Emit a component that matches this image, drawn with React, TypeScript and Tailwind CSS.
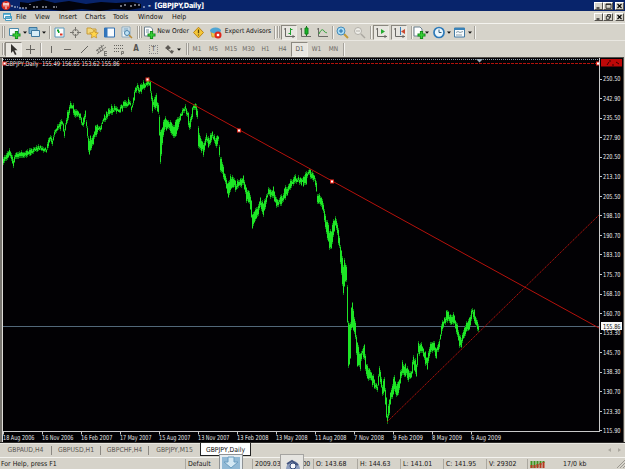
import type { ReactNode } from "react";

const UI = "font-['DejaVu_Sans_Condensed','DejaVu_Sans',sans-serif] font-stretch-condensed";

// x, high, low
const BARS: number[][] = [
  [3,158,165],[5,155,160],[7,152,158],[9,149,155],[11,153,159],[13,160,166],[15,154,159],[18,153,158],[22,152,157],[26,151,156],[30,150,155],[34,148,152],[37,147,151],[40,145,149],[43,148,152],[46,149,152],[48,140,147],[50,135,140],[52,140,144],[54,131,136],[57,126,130],[60,122,128],[62,121,126],[64,129,136],[66,117,125],[69,106,113],[71,103,108],[74,108,116],[78,110,116],[80,114,120],[82,121,127],[85,111,118],[87,128,136],[88.5,142,155],[90,136,150],[92,138,145],[95,128,136],[98,125,130],[100,127,132],[102,119,123],[105,115,120],[108,109,115],[112,107,112],[115,107,111],[118,109,112],[121,106,110],[124,102,107],[127,101,106],[129,99,103],[131,106,111],[133,98,103],[135,88,94],[137,85,90],[139,87,93],[142,84,90],[145,82,87],[147,80,84],[148,78,83],[150,84,90],[152,98,110],[154,100,106],[156,95,108],[158,106,112],[160,130,160],[161,132,156],[163,120,134],[165,118,130],[168,120,127],[170,122,134],[173,125,135],[176,122,134],[179,115,121],[182,108,114],[185,105,110],[187,110,117],[189,120,131],[191,115,122],[193,104,111],[195,105,110],[197,109,118],[198,125,146],[200,138,148],[203,144,154],[206,133,140],[208,138,147],[212,132,138],[215,138,147],[218,137,142],[220,157,170],[222,163,175],[225,176,184],[228,184,196],[230,177,190],[233,178,185],[236,183,190],[239,180,187],[243,176,184],[246,190,200],[249,191,201],[251,200,215],[252,214,230],[254,210,222],[257,207,218],[260,199,208],[263,205,215],[266,196,202],[268,187,195],[270,191,197],[273,188,195],[276,198,209],[279,200,205],[282,196,202],[285,188,196],[288,185,192],[291,180,186],[294,176,183],[297,178,182],[300,177,182],[304,178,185],[306,173,182],[308,169,175],[311,172,178],[314,176,181],[316,181,190],[317,194,203],[320,198,205],[323,204,213],[325,216,230],[327,222,240],[329,230,247],[331,231,248],[333,220,235],[335,218,224],[337,222,236],[339,238,248],[341,250,275],[343,268,296],[344,260,285],[346,265,282],[347,288,320],[348,320,368],[350,325,358],[351,310,330],[352,303,325],[355,322,340],[357,345,365],[360,355,368],[362,348,355],[364,346,358],[366,364,377],[369,370,380],[372,374,384],[375,382,390],[377,384,392],[379,367,378],[382,384,395],[384,380,393],[386,398,415],[387,413,422],[389,398,412],[391,390,400],[394,375,388],[396,385,398],[399,378,388],[402,363,375],[405,366,374],[408,371,380],[411,370,378],[413,355,366],[416,365,377],[418,344,355],[421,344,350],[424,351,360],[427,358,368],[430,345,352],[433,342,350],[436,349,356],[439,339,348],[441,326,335],[444,318,325],[447,310,320],[450,316,325],[454,315,325],[457,324,334],[459,335,348],[461,337,345],[464,325,335],[467,322,332],[470,315,325],[472,308,315],[474,311,320],[476,318,328],[478,325,332],
];

// Deterministic value in -0.5..0.5 for each column
function jitter(i: number, seed: number) {
  let h = Math.imul(i + 1, 374761393) ^ Math.imul(seed, 668265263);
  h = Math.imul(h ^ (h >>> 13), 1274126177);
  return ((h ^ (h >>> 16)) >>> 0) / 4294967296 - 0.5;
}

function pricePath(grow: number) {
  let d = "";
  let k = 0;
  for (let x = 3; x <= 478; x++) {
    while (k < BARS.length - 2 && BARS[k + 1][0] < x) k++;
    const a = BARS[k];
    const b = BARS[k + 1];
    const t = (x - a[0]) / (b[0] - a[0]);
    const amp = x < 60 ? 2.5 : 5;
    const hi = a[1] + (b[1] - a[1]) * t + jitter(x, 3) * amp - grow;
    const lo = a[2] + (b[2] - a[2]) * t + jitter(x, 11) * amp + grow;
    d += `M${x + 0.5} ${hi.toFixed(1)}V${Math.max(lo, hi + 2).toFixed(1)}`;
  }
  return d;
}

const PRICES = ["250.50","242.90","235.50","227.90","220.50","213.10","205.50","198.10","190.70","183.10","175.70","168.10","160.70","153.30","145.70","138.30","130.70","123.30","115.90"];
const DATES: [number, string][] = [
  [3,"18 Aug 2006"],[42,"16 Nov 2006"],[81,"16 Feb 2007"],[120,"17 May 2007"],[159,"15 Aug 2007"],[198,"13 Nov 2007"],[237,"13 Feb 2008"],[276,"13 May 2008"],[315,"11 Aug 2008"],[354,"7 Nov 2008"],[393,"9 Feb 2009"],[432,"8 May 2009"],[471,"6 Aug 2009"],
];

function Chart() {
  return (
    <svg className="block shrink-0" width="625" height="386" viewBox="0 57 625 386" fontFamily="'DejaVu Sans Condensed','DejaVu Sans',sans-serif" fontStretch="condensed">
      <rect x="0" y="57" width="625" height="386" fill="#020104" />
      <rect x="0" y="57" width="2" height="386" fill="#77746e" />
      <path d="M2.5 58V443" stroke="#dedcd8" />
      <path d="M0 57.5H625" stroke="#504e4a" />
      <path d="M3 59.5H599" stroke="#8fa0ac" strokeDasharray="1 1" />
      <path d="M3 326.5H599" stroke="#526879" />
      <path d={pricePath(1)} stroke="#0a7813" strokeWidth="1" shapeRendering="crispEdges" />
      <path d={pricePath(-0.7)} stroke="#1ee626" strokeWidth="1" shapeRendering="crispEdges" />
      <g stroke="#b5120c" strokeWidth="1" fill="none">
        <path d="M3 63.5H599" strokeDasharray="3 1" />
        <path d="M147 79L599 328" />
        <path d="M387 422L599 215" strokeDasharray="1.5 0.8" />
      </g>
      {[[147.5, 79.5], [239, 130.5], [332, 181.5], [598, 63.5], [4.5, 63.5]].map(([x, y]) => (
        <rect key={x} x={x - 1.5} y={y - 1.5} width="3" height="3" fill="#fff" stroke="#e3281d" />
      ))}
      <text x="5.5" y="66" fontSize="6.5" fill="#e4e4e4" textLength="114" lengthAdjust="spacingAndGlyphs" xmlSpace="preserve">GBPJPY,Daily  155.49 156.65 153.62 155.86</text>
      <path d="M476 59H483L479.5 62.5Z" fill="#9aabb8" />
      <path d="M599.5 58V431.5M3 431.5H600" stroke="#c9c9c9" fill="none" />
      <g fontSize="6.8" fill="#e6e6e6">
        {PRICES.map((p, i) => (
          <g key={p}>
            <path d={`M600 ${Math.round(78.5 + i * 19.55) + 0.5}h2`} stroke="#c9c9c9" />
            <text x="603" y={81.2 + i * 19.55} textLength="17.5" lengthAdjust="spacingAndGlyphs">{p}</text>
          </g>
        ))}
        {DATES.map(([x, t]) => (
          <g key={x}>
            <path d={`M${x + 0.5} 432v2.5`} stroke="#c9c9c9" />
            <text x={x} y="440" textLength={t.length === 11 ? 31.5 : 30} lengthAdjust="spacingAndGlyphs">{t}</text>
          </g>
        ))}
      </g>
      <rect x="601" y="59" width="21" height="7.5" fill="#be0808" />
      <path d="M607 65l2-3M609 61h2M612 65h2M616 62l3 2" stroke="#300" />
      <rect x="601" y="322" width="21" height="8" fill="#f8f8f8" />
      <text x="603" y="328.5" fontSize="6.8" fill="#111" textLength="17.5" lengthAdjust="spacingAndGlyphs">155.86</text>
      <path d="M623.5 58V443" stroke="#55524d" />
      <path d="M624.5 57V443" stroke="#d6d3ca" />
      <path d="M0 442.5H625" stroke="#2b2a28" />
    </svg>
  );
}

function Slot({ w, on, children }: { w: string; on?: boolean; children?: ReactNode }) {
  return (
    <div className={`flex h-[15px] shrink-0 items-center justify-center whitespace-nowrap ${w} ${on ? "border border-[#eeece6] border-t-[#8b8880] border-l-[#8b8880] bg-[#e8e6e0]" : ""}`}>
      {children}
    </div>
  );
}

const Ic = ({ children }: { children: ReactNode }) => (
  <svg className="block shrink-0" width="13" height="13" viewBox="0 0 13 13" fill="none">{children}</svg>
);
const Drop = () => <svg className="block shrink-0" width="4" height="3" viewBox="0 0 4 3"><path d="M0 .5h4L2 2.7z" fill="#111" /></svg>;
const Grip = () => <div className="h-[12px] w-[3px] shrink-0 border-r border-l border-[#a29f98] bg-[#edebe6]" />;
const Sep = () => <div className="h-[13px] w-[2px] shrink-0 border-r border-[#f4f3ef] bg-[#a5a29b]" />;
const Plus = () => <path d="M8.5 5v8M4.5 9h8" stroke="#138b18" strokeWidth="3.2" />;
const PlusLight = () => <path d="M8.5 6v6M5.5 9h6" stroke="#35ce36" strokeWidth="1.6" />;

function WinButtons({ restore }: { restore?: boolean }) {
  const b = "flex h-[8px] items-center justify-center border border-white border-r-[#55524d] border-b-[#55524d] bg-[#d6d3ca]";
  return (
    <div className="flex pr-px">
      <div className={`${b} w-[9px]`}><svg width="7" height="6"><path d="M1.5 5h3" stroke="#000" strokeWidth="1.2" /></svg></div>
      <div className={`${b} w-[10px]`}>
        <svg width="7" height="6" fill="none" stroke="#111" strokeWidth=".8">
          {restore ? <path d="M2.5 2V.6h3v3H4.5M1.3 2.3h3v3h-3z" /> : <path d="M1 1h5v4.3H1zM1 1.4h5" />}
        </svg>
      </div>
      <div className={`${b} ml-[2px] w-[9px]`}><svg width="7" height="6"><path d="M1.5 1l4 4M5.5 1l-4 4" stroke="#000" strokeWidth="1.1" /></svg></div>
    </div>
  );
}

function TitleBar() {
  return (
    <div className="flex h-[11px] items-center bg-[#08246b] pl-[1px]">
      <svg className="shrink-0" width="147" height="11" viewBox="0 0 147 11" fill="none">
        <circle cx="5" cy="5.5" r="4.5" fill="#d62b20" />
        <path d="M2 4h6M3 2.5v4M7 2.5v4M5 3v6" stroke="#fff" />
        <path d="M19 2l8 1 15-3 12 3 14-2 17 3 15-2 15 1 17-1 8 2v4l-12 2-15-1-14 2-18-2-19 2-16-2-19 1-8-3z" fill="#02030b" />
        <path d="M11 5v3M13 7h4M18 8h8M29 4v1M32 7h5M41 7h6M52 7h4M120 7v-2M124 4v3M129 6h3M134 4v3M137 5h3M142 7h2" stroke="#d9deea" strokeDasharray="2 1" />
      </svg>
      <div className="flex-1 text-[7.3px] leading-[11px] font-bold tracking-[-0.28px] whitespace-nowrap text-white"><span className="mr-[2px]">-</span> [GBPJPY,Daily]</div>
      <WinButtons />
    </div>
  );
}

function MenuBar() {
  return (
    <div className="flex h-[12px] items-center text-[7px] leading-[12px]">
      <div className="w-[16px] pl-[3px]">
        <svg className="block" width="10" height="10" fill="none"><path d="M.5 1.5h7v5h-7zM2.5 4.5h6v4h-6z" fill="#f7fbfc" stroke="#4b9bc0" /><path d="M.5 2h7M3 5h6" stroke="#3fa0c8" strokeWidth="1.5" /></svg>
      </div>
      <div className="w-[19px]">File</div>
      <div className="w-[24px]">View</div>
      <div className="w-[26px]">Insert</div>
      <div className="w-[28px]">Charts</div>
      <div className="w-[25px]">Tools</div>
      <div className="w-[34px]">Window</div>
      <div className="flex-1">Help</div>
      <WinButtons restore />
    </div>
  );
}

function MainToolbar() {
  return (
    <div className="flex h-[17px] items-center border-t border-[#f4f3ef] text-[6.6px]">
      <div className="ml-[2px]"><Grip /></div>
      <Slot w="w-[18px]"><Ic><path d="M1.5 2.5h9v7h-9z" fill="#f4fafc" stroke="#4a88aa" /><Plus /><PlusLight /></Ic></Slot><Drop />
      <Slot w="w-[15px]"><Ic><path d="M1 1.5h8v6H1z" fill="#7fb5d6" stroke="#3e789f" /><path d="M3.5 4.5h8v6h-8z" fill="#d7edf7" stroke="#3e789f" /></Ic></Slot><Drop />
      <div className="ml-[3px]"><Sep /></div>
      <Slot w="w-[16px]"><Ic><path d="M2 2h9v9H2z" fill="#fdfdfd" stroke="#5a98bc" /><path d="M4 4.5h2M5 6h1.5" stroke="#12a02b" strokeWidth="2" /><path d="M7 8.5h2.5" stroke="#dd3322" strokeWidth="2" /></Ic></Slot>
      <Slot w="w-[17px]"><Ic><circle cx="6.5" cy="6.5" r="3" stroke="#77756f" /><path d="M6.5 1v4M6.5 8v4M1 6.5h4M8 6.5h4" stroke="#77756f" /></Ic></Slot>
      <Slot w="w-[17px]"><Ic><path d="M1 2h4l1 1h4v5H1z" fill="#f3d87c" stroke="#c69a38" /><path d="M8 4l1.3 2.6 3 .3-2.2 2 .6 3L8 10.5l-2.7 1.4.6-3-2.2-2 3-.3z" fill="#ffd54a" stroke="#b98213" strokeWidth=".6" /></Ic></Slot>
      <Slot w="w-[17px]"><Ic><path d="M1.5 2h10v9h-10z" fill="#f8fbfe" stroke="#3170b2" /><path d="M3 2v9" stroke="#3276bd" strokeWidth="3" /></Ic></Slot>
      <Slot w="w-[17px]"><Ic><path d="M2 1h8v10H2z" fill="#eef4f8" stroke="#8ba9bd" /><path d="M3.5 3h5M3.5 5h2" stroke="#5790b5" /><circle cx="7" cy="7" r="2.5" fill="#bee2f5" stroke="#477ea7" /><path d="M9 9l3 3" stroke="#b98a34" strokeWidth="1.5" /></Ic></Slot>
      <div className="ml-[2px]"><Sep /></div>
      <Grip />
      <Slot w="w-[14px]"><Ic><path d="M1.5 1h6l2 2v7h-8z" fill="#fff" stroke="#6c8292" /><path d="M3 4h3M3 6h3" stroke="#738e9e" /><Plus /><PlusLight /></Ic></Slot>
      <Slot w="w-[34px]">New Order</Slot>
      <Slot w="w-[17px]"><Ic><path d="M6.5 1.2l5 5.3-5 5.3-5-5.3z" fill="#f4c638" stroke="#bc8614" /><path d="M6.5 3.5v3.7M6.5 8.5v1" stroke="#5d470b" strokeWidth="1.3" /></Ic></Slot>
      <Slot w="w-[17px]"><Ic><path d="M2 6l1 5h7l1-5z" fill="#f2c64b" stroke="#bd8c25" strokeWidth=".7" /><ellipse cx="6.5" cy="4.5" rx="5.5" ry="3" fill="#4fa5d4" /><circle cx="9" cy="9" r="3.5" fill="#dd281c" /><path d="M7.8 7.8h2.4v2.4H7.8z" fill="#fff" /></Ic></Slot>
      <Slot w="w-[48px]">Expert Advisors</Slot>
      <div className="ml-[2px] mr-[1px]"><Sep /></div>
      <Grip />
      <div className="w-px" />
      <Slot w="w-[16px]" on><Ic><path d="M2.5 2v8.5H12M1 3h2M10 9v3" stroke="#6a6965" /><path d="M7.5 2v7M5.5 7.5h2M7.5 3.5h2" stroke="#21a130" /></Ic></Slot>
      <Slot w="w-[17px]"><Ic><path d="M2.5 2v8.5H12M1 3h2" stroke="#6a6965" /><path d="M7.5 0v10" stroke="#15741d" /><path d="M6 2h3v6H6z" fill="#15b525" stroke="#13801c" /></Ic></Slot>
      <Slot w="w-[17px]"><Ic><path d="M2.5 2v8.5H12M1 3h2" stroke="#6a6965" /><path d="M3 8c2-5 4-5 5-3s2 1 3 2" stroke="#31a038" /></Ic></Slot>
      <div className="ml-[1px]"><Sep /></div>
      <Slot w="w-[17px]"><Ic><path d="M8 8l4 4" stroke="#c19a38" strokeWidth="2" /><circle cx="5" cy="5" r="4" fill="#a9dcf6" stroke="#478cb9" /><path d="M3 5h4M5 3v4" stroke="#236faa" /></Ic></Slot>
      <Slot w="w-[17px]"><Ic><path d="M8 8l4 4" stroke="#aaa7a0" strokeWidth="1.5" /><circle cx="5" cy="5" r="3.5" fill="#efeee9" stroke="#b2afa8" /><path d="M3 5h4" stroke="#b2afa8" /></Ic></Slot>
      <div className="ml-[2px] mr-[1px]"><Sep /></div>
      <Slot w="w-[16px]" on><Ic><path d="M2.5 2v8.5H12M1 3h2M10 9v3" stroke="#6a6965" /><path d="M6 3l4 2.5L6 8z" fill="#24ab30" /></Ic></Slot>
      <div className="w-[2px]" />
      <Slot w="w-[16px]" on><Ic><path d="M2.5 2v8.5H12M1 3h2M10 9v3" stroke="#6a6965" /><path d="M7.5 1v8" stroke="#3c7fb9" /><path d="M12 3L8 5.5 12 8z" fill="#c9472e" /></Ic></Slot>
      <div className="ml-[4px]"><Sep /></div>
      <Slot w="w-[12px]"><Ic><path d="M1 1h6l2 2v7H1z" fill="#fff" stroke="#6c8292" /><Plus /><PlusLight /></Ic></Slot>
      <Drop />
      <div className="w-px" />
      <Slot w="w-[17px]"><Ic><circle cx="7" cy="6.5" r="5" fill="#eaf6fd" stroke="#2d79b8" strokeWidth="1.7" /><path d="M7 3.5v3h2.5" stroke="#315d7d" /></Ic></Slot>
      <Drop />
      <Slot w="w-[17px]"><Ic><path d="M1.500 2h10v9h-10z" fill="#f7fbfd" stroke="#437ba5" /><path d="M1 3h11" stroke="#3a83b9" strokeWidth="2" /><path d="M3 6.5l2-1 2 1 3-1M3 9h6" stroke="#8a9ca8" /></Ic></Slot>
      <Drop />
      <div className="ml-[2px]"><Sep /></div>
    </div>
  );
}

function LineToolbar() {
  return (
    <div className="flex h-[17px] items-center border-t border-[#e9e7e1] text-[6.5px] text-[#55534f]">
      <div className="ml-[2px]"><Grip /></div>
      <Slot w="w-[17px]" on><Ic><path d="M4 1v9l2-2 2 4 1.5-.7-2-4h3z" fill="#33312e" /></Ic></Slot>
      <Slot w="w-[17px]"><Ic><path d="M6.5 2v9M2 6.5h9" stroke="#66645f" /></Ic></Slot>
      <div className="ml-[1px] mr-[1px]"><Sep /></div>
      <Slot w="w-[16px]"><Ic><path d="M6.5 3v7" stroke="#66645f" /></Ic></Slot>
      <Slot w="w-[17px]"><Ic><path d="M3 6.5h7" stroke="#66645f" /></Ic></Slot>
      <Slot w="w-[17px]"><Ic><path d="M3 10l7-7" stroke="#66645f" /></Ic></Slot>
      <Slot w="w-[17px]"><Ic><path d="M1 8l8-6M2 11l9-7M4 4l2 5M6 2l2 6M2 6l2 4M9.5 8.5h2.5M9.5 10.5H12M9.5 12.5H12M9.5 8v5" stroke="#66645f" strokeWidth=".8" /></Ic></Slot>
      <Slot w="w-[17px]"><Ic><path d="M2 2.5h9M2 5.5h9M2 8.5h6" stroke="#66645f" strokeDasharray="1 1" /><path d="M9.5 12V8.5h2v2h-2" stroke="#66645f" strokeWidth=".8" /></Ic></Slot>
      <Slot w="w-[18px]"><span className="text-[8px] font-bold">A</span></Slot>
      <Slot w="w-[17px]"><span className="flex h-[9px] w-[9px] items-center justify-center border border-dotted border-[#888] text-[7px] leading-none">T</span></Slot>
      <Slot w="w-[15px]"><Ic><path d="M2 5l3-3 3 3-3 2zM8 7l3 1-2 3-2-2z" fill="#5c5954" /><path d="M4 6l4 3" stroke="#5c5954" /></Ic></Slot>
      <Drop />
      <div className="ml-[5px]"><Grip /></div>
      <div className="flex pt-[2px] text-[#6a6762]">
        <Slot w="w-[16px]">M1</Slot>
        <Slot w="w-[17px]">M5</Slot>
        <Slot w="w-[18px]">M15</Slot>
        <Slot w="w-[17px]">M30</Slot>
        <Slot w="w-[17px]">H1</Slot>
        <Slot w="w-[17px]">H4</Slot>
      </div>
      <Slot w="w-[17px]" on><span className="pt-px">D1</span></Slot>
      <div className="flex pt-[2px] text-[#6a6762]">
        <Slot w="w-[17px]">W1</Slot>
        <Slot w="w-[17px]">MN</Slot>
      </div>
      <div className="ml-px"><Sep /></div>
    </div>
  );
}

function Tabs() {
  const tab = "flex h-[9px] shrink-0 items-center justify-center border-r border-[#8c8983]";
  return (
    <div className="flex h-[14px] items-start border-t border-[#e9e7e1] pt-[2px] text-[6.8px] leading-none text-[#5b5852]">
      <div className={`${tab} w-[52px]`}>GBPAUD,H4</div>
      <div className={`${tab} w-[49px]`}>GBPUSD,H1</div>
      <div className={`${tab} w-[48px]`}>GBPCHF,H4</div>
      <div className={`${tab} w-[51px] border-r-0`}>GBPJPY,M15</div>
      <div className="-mt-[3px] flex h-[13px] w-[51px] items-center justify-center border-r border-b border-l border-[#222] bg-white pt-[2px] text-[#111]">GBPJPY,Daily</div>
      <div className="flex flex-1 justify-end gap-[7px] pt-[2px] pr-[4px]">
        <svg width="3" height="4"><path d="M3 0v4L0 2z" fill="#aaa79f" /></svg>
        <svg width="3" height="4"><path d="M0 0v4l3-2z" fill="#aaa79f" /></svg>
      </div>
    </div>
  );
}

function StatusBar() {
  const cell = "h-[10px] shrink-0 border-l border-[#aaa79f] pl-[2px]";
  return (
    <div className="relative flex h-[12px] items-center border-t border-[#f4f3ef] text-[6.9px] leading-[10px] whitespace-nowrap text-[#161616]">
      <div className="w-[185px] pl-[1px]">For Help, press F1</div>
      <div className={`${cell} w-[67px]`}>Default</div>
      <div className={`${cell} w-[61px]`}>2009.03.10 00:00</div>
      <div className={`${cell} w-[44px]`}>O: 143.68</div>
      <div className={`${cell} w-[43px]`}>H: 144.63</div>
      <div className={`${cell} w-[43px]`}>L: 141.01</div>
      <div className={`${cell} w-[43px]`}>C: 141.95</div>
      <div className={`${cell} w-[41px]`}>V: 29302</div>
      <div className={`${cell} flex w-[36px] items-center`}>
        <svg width="15" height="8"><path d="M1.5 1v7M4.5 1v7M7.5 1v6M10.5 1v4M13.5 1v2" stroke="#3e941f" strokeWidth="2" /><path d="M1.5 5v3M4.5 5v3M7.5 4v4M10.5 3v5M13.5 2v6" stroke="#b63920" strokeWidth="2" /></svg>
      </div>
      <div className="flex-1">17/0 kb</div>
      <svg width="8" height="9"><path d="M0 9l8-8M3 9l5-5M6 9l2-2" stroke="#9b9891" /></svg>
      <div className="absolute -top-[4px] left-[219px] h-[16px] w-[24px] overflow-hidden border border-[#8f9294] bg-[#e6edf1]">
        <svg width="22" height="16"><path d="M2 2h18v14H2z" fill="#91b9d5" /><path d="M8 2h6v5h4l-7 6-7-6h4z" fill="#d3e8f4" stroke="#6a9dc0" /></svg>
      </div>
      <div className="absolute -top-[4px] left-[280px] h-[16px] w-[24px] overflow-hidden border border-[#a5a4a1] bg-[#e5e4e0]">
        <svg width="23" height="16"><path d="M5 15c0-5 3-9 7-9s7 4 7 9z" fill="#8f9fbf" /><path d="M6 9l5-3 6 4" stroke="#44557f" fill="none" strokeWidth="2" /><circle cx="12" cy="11" r="3" fill="#f5f7fa" stroke="#344979" /></svg>
      </div>
    </div>
  );
}

export default function App() {
  return (
    <div className={`flex h-[469px] w-[625px] flex-col overflow-hidden bg-[#d6d3ca] text-[#111] ${UI}`}>
      <TitleBar />
      <MenuBar />
      <MainToolbar />
      <LineToolbar />
      <Chart />
      <Tabs />
      <StatusBar />
    </div>
  );
}
